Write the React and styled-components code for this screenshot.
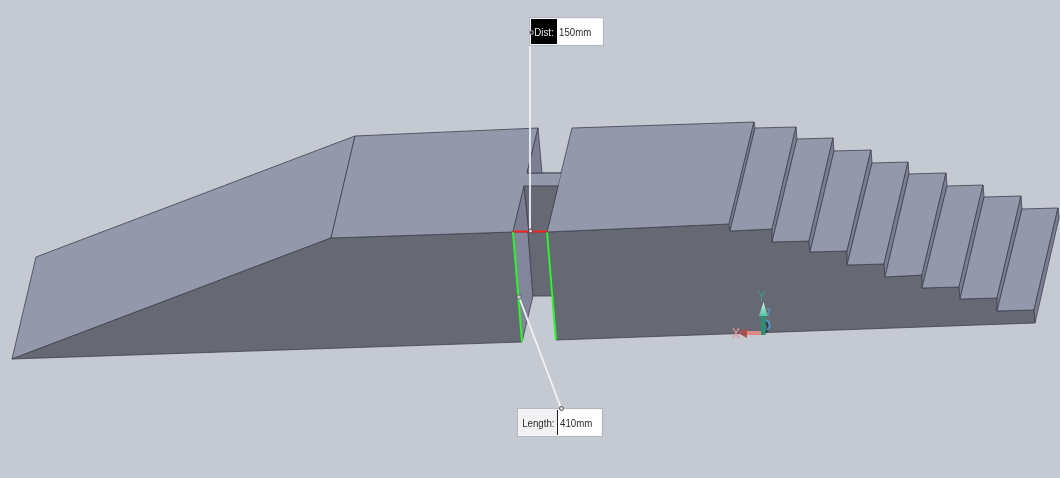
import React from 'react';
import styled, { createGlobalStyle } from 'styled-components';

const GlobalStyle = createGlobalStyle`
    html, body {
        margin: 0;
        padding: 0;
        background: #c5c9d2;
    }
`;

const Viewport = styled.div`
    position: relative;
    width: 1060px;
    height: 478px;
    overflow: hidden;
    background: #c5c9d2;
`;

const Model = styled.svg`
    display: block;
    width: 1060px;
    height: 478px;
    filter: blur(0.5px);
`;

const Callout = styled.div`
    position: absolute;
    left: ${props => props.left}px;
    top: ${props => props.top}px;
    height: 25px;
    display: flex;
    align-items: stretch;
    border: 2px solid #f6f6f8;
    outline: 1px solid #b4b7c0;
    outline-offset: -1px;
    background: #fff;
    font-family: "Liberation Sans", Arial, sans-serif;
    font-size: 11px;
    color: #2a2a2a;
`;

const CalloutLabel = styled.div`
    width: ${props => props.width}px;
    display: flex;
    align-items: center;
    justify-content: center;
    box-sizing: border-box;
    background: ${props => (props.dark ? '#000' : '#f1f1f3')};
    color: ${props => (props.dark ? '#eee' : '#2a2a2a')};
    border-right: ${props => (props.dark ? 'none' : '1px solid #222')};
`;

const CalloutValue = styled.div`
    width: ${props => props.width}px;
    display: flex;
    align-items: center;
    padding-left: 2px;
    box-sizing: border-box;
`;

const Squeezed = styled.span`
    display: inline-block;
    transform: scaleX(0.88);
    transform-origin: ${props => props.origin || 'left'} center;
    filter: blur(0.25px);
`;

const Anchor = styled.span`
    position: absolute;
    left: ${props => props.left}px;
    top: ${props => props.top}px;
    width: 3px;
    height: 3px;
    border: 1px solid ${props => (props.dark ? '#a8a8a8' : '#555')};
    border-radius: 50%;
    background: ${props => (props.dark ? '#333' : '#d6d9e0')};
`;

const TOP = '#9498ab';
const FRONT = '#666874';
const RISER = '#7b7e92';
const EDGE = '#3f414e';

const steps = [
    { back: [[755, 128], [796, 127]], front: [[730, 231], [772, 229]] },
    { back: [[797, 139], [833, 138]], front: [[772, 242], [809, 241]] },
    { back: [[834, 151], [871, 150]], front: [[810, 252], [847, 251]] },
    { back: [[872, 163], [908, 162]], front: [[847, 265], [884, 264]] },
    { back: [[909, 174], [946, 173]], front: [[885, 277], [922, 275]] },
    { back: [[947, 186], [983, 185]], front: [[922, 288], [959, 287]] },
    { back: [[984, 197], [1021, 196]], front: [[960, 299], [997, 298]] },
    { back: [[1022, 209], [1058, 208]], front: [[997, 311], [1034, 310]] },
];

const pts = list => list.map(p => p.join(',')).join(' ');

const Face = ({ points, fill }) => (
    <polygon points={pts(points)} fill={fill} stroke={EDGE} strokeWidth="0.8" strokeLinejoin="round" />
);

const rightFront = [
    [547, 232], [730, 224], [730, 231], [772, 229], [772, 242], [809, 241], [810, 252], [847, 251],
    [847, 265], [884, 264], [885, 277], [922, 275], [922, 288], [959, 287], [960, 299], [997, 298],
    [997, 311], [1034, 310], [1035, 323], [556, 340],
];

const App = () => (
    <Viewport>
        <GlobalStyle />
        <Model viewBox="0 0 1060 478">
            <defs>
                <linearGradient id="yHead" x1="0" y1="0" x2="0" y2="1">
                    <stop offset="0" stopColor="#d4f4e8" />
                    <stop offset="1" stopColor="#55c4a0" />
                </linearGradient>
            </defs>

            {/* ramp and front faces */}
            <Face points={[[12, 359], [36, 257], [355, 136], [331, 238]]} fill={TOP} />
            <Face points={[[12, 359], [331, 238], [513, 232], [522, 342]]} fill={FRONT} />
            <Face points={rightFront} fill={FRONT} />

            {/* plates either side of the cut */}
            <Face
                points={[[355, 136], [538, 128], [527, 173], [561, 173], [558, 186], [524, 186], [513, 232], [331, 238]]}
                fill={TOP}
            />
            <Face
                points={[[572, 128], [754, 122], [729, 224], [547, 232], [558, 186], [561, 173]]}
                fill={TOP}
            />
            <polygon points="527,173.5 561,173.5 558,185.5 524,185.5" fill={TOP} />
            <line x1="527" y1="173" x2="561" y2="173" stroke={EDGE} strokeWidth="0.8" />
            <Face points={[[527, 173], [538, 128], [542, 173]]} fill={RISER} />
            <Face points={[[513, 232], [524, 186], [529, 232]]} fill={RISER} />
            <Face points={[[524, 186], [558, 186], [547, 232], [529, 232]]} fill={FRONT} />

            {/* inside of the cut */}
            <Face points={[[513, 232], [528, 232], [533, 296], [522, 342]]} fill="#83869a" />
            <Face points={[[528, 232], [547, 232], [553, 296], [533, 296]]} fill={FRONT} />

            {/* stairs */}
            <Face points={[[729, 224], [754, 122], [755, 128], [730, 231]]} fill={RISER} />
            {steps.map((s, i) => (
                <React.Fragment key={i}>
                    <Face points={[s.front[0], s.back[0], s.back[1], s.front[1]]} fill={TOP} />
                    {steps[i + 1]
                        ? <Face points={[s.front[1], s.back[1], steps[i + 1].back[0], steps[i + 1].front[0]]} fill={RISER} />
                        : <Face points={[s.front[1], s.back[1], [1059, 218], [1035, 323]]} fill={RISER} />}
                </React.Fragment>
            ))}

            {/* selected edges */}
            <line x1="513" y1="232" x2="522" y2="342" stroke="#2df52d" strokeWidth="2" />
            <line x1="547" y1="232" x2="556" y2="340" stroke="#2df52d" strokeWidth="2" />
            <line x1="513" y1="231.5" x2="547" y2="231.5" stroke="#f52424" strokeWidth="2.2" />

            {/* leaders */}
            <line x1="530" y1="44" x2="530" y2="231" stroke="#eef0f4" strokeWidth="1.8" />
            <line x1="519" y1="297" x2="561" y2="408" stroke="#f0f2f5" strokeWidth="1.8" />
            <circle cx="530.5" cy="231" r="2" fill="#d8d8dc" stroke="#333" strokeWidth="0.8" />
            <circle cx="519" cy="297" r="2.2" fill="#c8ccd0" stroke="#3c5c48" strokeWidth="0.8" />

            {/* triad */}
            <g>
                <path d="M766 322 C769 326 769 330 765 333" fill="none" stroke="#2b3240" strokeWidth="2" />
                <path d="M766 320 C771 322 770 328 767 330" fill="none" stroke="#4aa3d8" strokeWidth="1.6" />
                <path d="M767 309 L770 309 L767 315 L770 315" fill="none" stroke="#4aa3d8" strokeWidth="1" />
                <rect x="741" y="331" width="24" height="4" fill="#dc8a86" />
                <polygon points="747,327.5 747,338 738,333" fill="#a8504e" />
                <rect x="761" y="308" width="4.5" height="27" fill="#2a8f73" />
                <polygon points="759,316 767.5,316 763.5,302" fill="url(#yHead)" />
                <path d="M758 291 L761.5 296 L765 291 M761.5 296 L761.5 301" fill="none" stroke="#3d9c8c" strokeWidth="1.2" />
                <path d="M733 328 L739 338 M739 328 L733 338" fill="none" stroke="#e2908e" strokeWidth="1.3" />
            </g>
        </Model>

        <Callout left={529} top={17}>
            <CalloutLabel dark width={26}><Squeezed origin="center">Dist:</Squeezed></CalloutLabel>
            <CalloutValue width={45}><Squeezed>150mm</Squeezed></CalloutValue>
            <Anchor dark left={-2} top={11} />
        </Callout>

        <Callout left={517} top={408}>
            <CalloutLabel width={39}><Squeezed origin="center">Length:</Squeezed></CalloutLabel>
            <CalloutValue width={43}><Squeezed>410mm</Squeezed></CalloutValue>
            <Anchor left={40} top={-4} />
        </Callout>
    </Viewport>
);

export default App;
